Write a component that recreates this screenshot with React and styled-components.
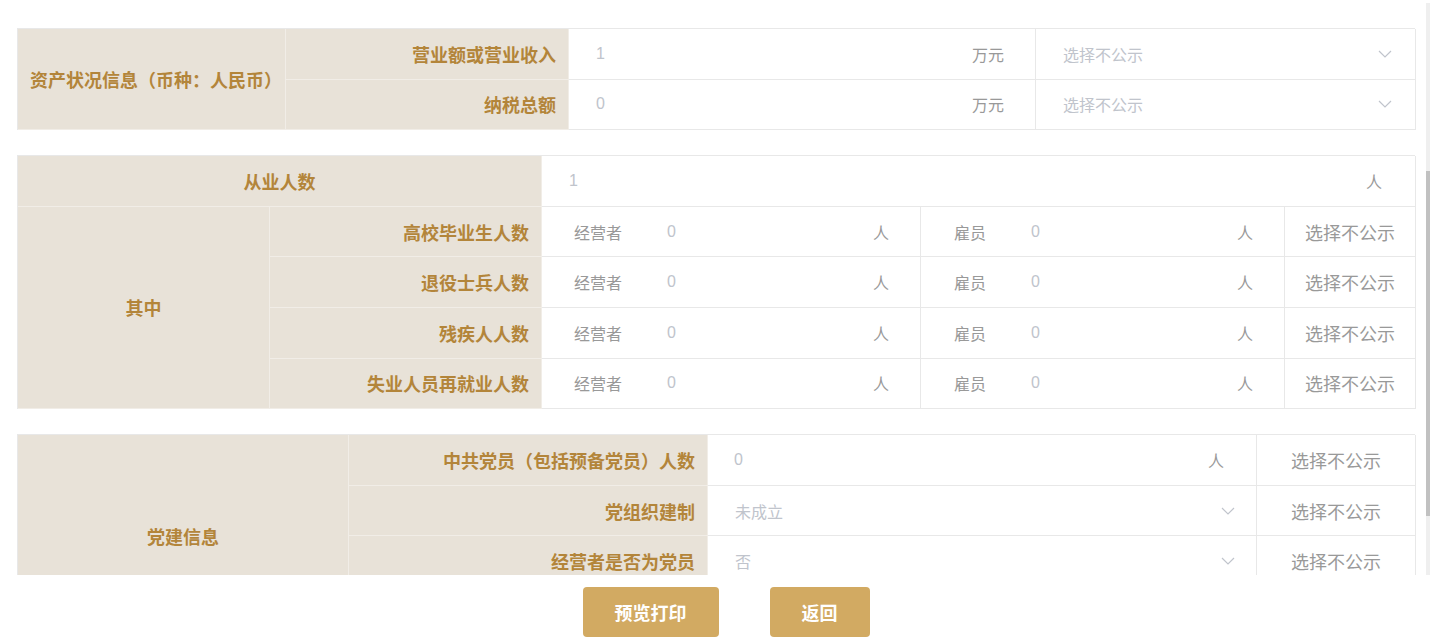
import React from 'react';
import styled, { createGlobalStyle } from 'styled-components';

const GlobalStyle = createGlobalStyle`
    html, body {
        margin: 0;
        padding: 0;
        background: #fff;
        font-family: "Microsoft YaHei", "Noto Sans CJK SC", "Noto Sans", sans-serif;
    }
`;

const LABEL_BG = '#e8e2d8';
const LINE = '#e8e8e8';

const Page = styled.div`
    width: 1430px;
    height: 644px;
    display: flex;
    flex-direction: column;
`;

const ScrollArea = styled.div`
    height: 575px;
    display: flex;
    overflow: hidden;
`;

const Content = styled.div`
    width: 1398px;
    padding: 28px 0 0 17px;
    display: flex;
    flex-direction: column;
    gap: 25px;
`;

const Track = styled.div`
    width: 4px;
    margin-left: 11px;
    height: 572px;
    margin-top: 3px;
    background: #efefef;
`;

const Thumb = styled.div`
    width: 4px;
    height: 345px;
    margin-top: 168px;
    background: #c1c1c1;
`;

const Table = styled.div`
    display: grid;
    grid-template-columns: ${p => p.cols};
    grid-auto-rows: 50.6px;
    border-top: 1px solid ${LINE};
    border-left: 1px solid ${LINE};
    flex-shrink: 0;
`;

const Label = styled.div`
    background: ${LABEL_BG};
    border-right: 1px solid #f1ede7;
    border-bottom: 1px solid #f1ede7;
    color: #b3853a;
    font-size: 18px;
    font-weight: bold;
    display: flex;
    align-items: center;
    justify-content: ${p => (p.right ? 'flex-end' : 'center')};
    padding: 0 12px;
    grid-row: ${p => (p.rows ? `span ${p.rows}` : 'auto')};
    grid-column: ${p => (p.span ? `span ${p.span}` : 'auto')};
`;

const Cell = styled.div`
    border-right: 1px solid ${LINE};
    border-bottom: 1px solid ${LINE};
    display: flex;
    align-items: center;
    padding: 0 ${p => p.pr || 31}px 0 ${p => p.pl || 27}px;
    grid-column: ${p => (p.span ? `span ${p.span}` : 'auto')};
    justify-content: ${p => (p.center ? 'center' : 'flex-start')};
`;

const Value = styled.span`
    flex: 1;
    font-size: 16px;
    color: #c0c4cc;
    font-family: "Liberation Sans", "Noto Sans CJK SC", sans-serif;
`;

const Unit = styled.span`
    font-size: 16px;
    color: #999;
`;

const Tag = styled.span`
    font-size: 16px;
    color: #999;
    width: ${p => p.w || 93}px;
    flex-shrink: 0;
`;

const Hidden = styled.span`
    font-size: 18px;
    color: #999;
`;

const Placeholder = styled.span`
    flex: 1;
    font-size: 16px;
    color: #c0c4cc;
`;

const Buttons = styled.div`
    display: flex;
    justify-content: center;
    gap: 51px;
    padding: 12px 0 0 22px;
`;

const Button = styled.button`
    height: 50px;
    padding: 0 32px;
    border: none;
    border-radius: 4px;
    background: #d2aa62;
    color: #fff;
    font-size: 18px;
    font-weight: bold;
    font-family: inherit;
    cursor: pointer;
`;

const Chevron = () => (
    <svg width="14" height="8" viewBox="0 0 14 8">
        <polyline points="1,1 7,7 13,1" fill="none" stroke="#c0c4cc" strokeWidth="1.2" />
    </svg>
);

const SelectCell = ({ text, pr }) => (
    <Cell pr={pr || 23}>
        <Placeholder>{text}</Placeholder>
        <Chevron />
    </Cell>
);

const staffRows = ['高校毕业生人数', '退役士兵人数', '残疾人人数', '失业人员再就业人数'];

const partyRows = [
    { label: '中共党员（包括预备党员）人数', value: '0', unit: '人' },
    { label: '党组织建制', select: '未成立' },
    { label: '经营者是否为党员', select: '否' },
];

const App = () => {
    return (
        <Page>
            <GlobalStyle />
            <ScrollArea>
                <Content>
                    <Table cols="268px 283px 467px 380px">
                        <Label rows={2}>资产状况信息（币种：人民币）</Label>
                        <Label right>营业额或营业收入</Label>
                        <Cell>
                            <Value>1</Value>
                            <Unit>万元</Unit>
                        </Cell>
                        <SelectCell text="选择不公示" />
                        <Label right>纳税总额</Label>
                        <Cell>
                            <Value>0</Value>
                            <Unit>万元</Unit>
                        </Cell>
                        <SelectCell text="选择不公示" />
                    </Table>

                    <Table cols="252px 272px 379px 364px 131px">
                        <Label span={2}>从业人数</Label>
                        <Cell span={3} pr={33}>
                            <Value>1</Value>
                            <Unit>人</Unit>
                        </Cell>
                        <Label rows={4}>其中</Label>
                        {staffRows.map(label => (
                            <React.Fragment key={label}>
                                <Label right>{label}</Label>
                                <Cell pl={32}>
                                    <Tag>经营者</Tag>
                                    <Value>0</Value>
                                    <Unit>人</Unit>
                                </Cell>
                                <Cell pl={33}>
                                    <Tag w={77}>雇员</Tag>
                                    <Value>0</Value>
                                    <Unit>人</Unit>
                                </Cell>
                                <Cell center pl={1} pr={1}>
                                    <Hidden>选择不公示</Hidden>
                                </Cell>
                            </React.Fragment>
                        ))}
                    </Table>

                    <Table cols="331px 359px 549px 159px">
                        <Label rows={4}>党建信息</Label>
                        {partyRows.map(row => (
                            <React.Fragment key={row.label}>
                                <Label right>{row.label}</Label>
                                {row.select ? (
                                    <SelectCell text={row.select} pr={21} />
                                ) : (
                                    <Cell pl={26} pr={32}>
                                        <Value>{row.value}</Value>
                                        <Unit>{row.unit}</Unit>
                                    </Cell>
                                )}
                                <Cell center pl={1} pr={1}>
                                    <Hidden>选择不公示</Hidden>
                                </Cell>
                            </React.Fragment>
                        ))}
                        {/* row below the fold, scrolled out of view */}
                        <Label right />
                        <Cell />
                        <Cell />
                    </Table>
                </Content>
                <Track>
                    <Thumb />
                </Track>
            </ScrollArea>
            <Buttons>
                <Button>预览打印</Button>
                <Button>返回</Button>
            </Buttons>
        </Page>
    );
};

export default App;
